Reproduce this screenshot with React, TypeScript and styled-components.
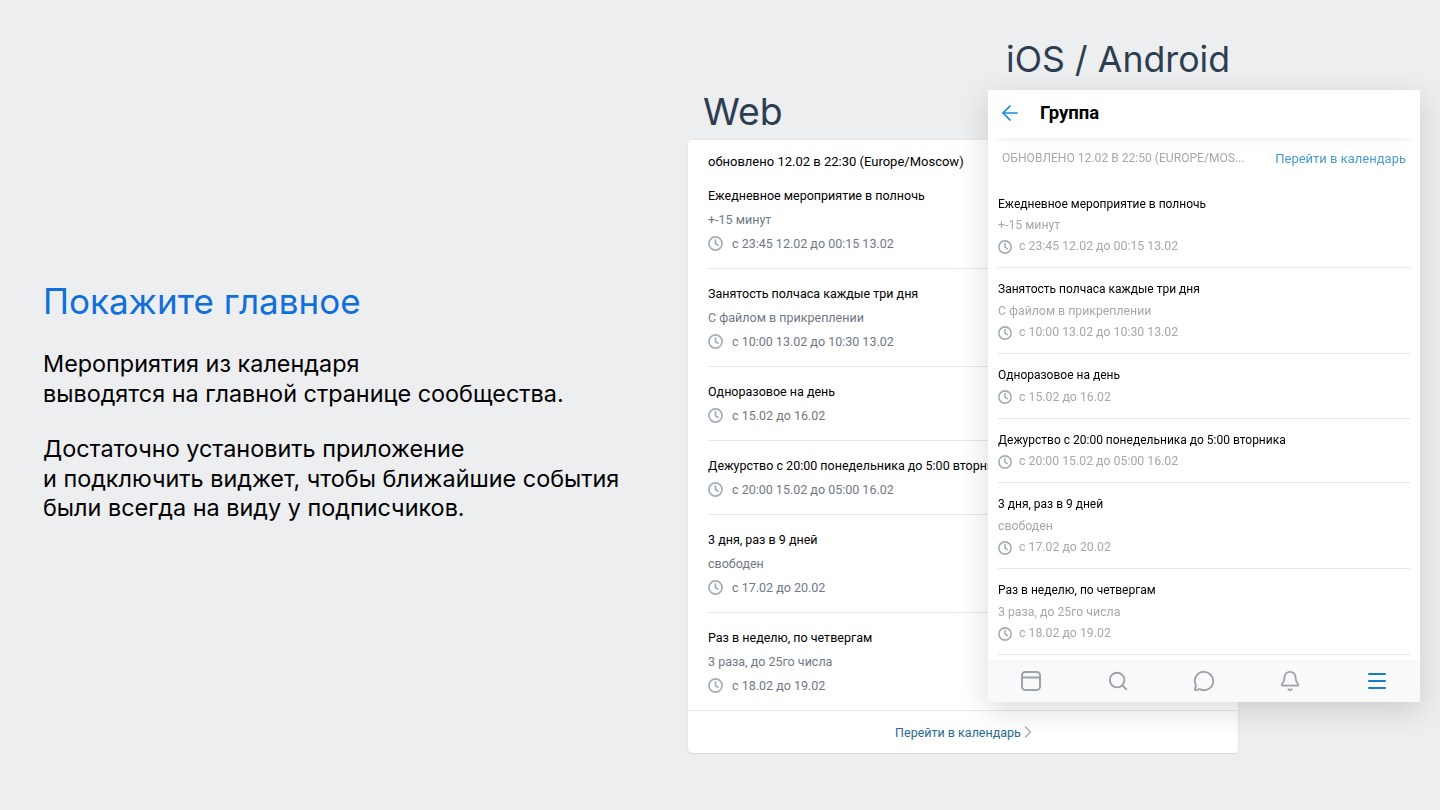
import * as React from 'react'
import styled, { createGlobalStyle } from 'styled-components'
import { ArrowLeft, Bell, ChevronRight, Menu, MessageCircle, Search } from 'lucide-react'

const GlobalStyle = createGlobalStyle`
  html, body {
    margin: 0;
    padding: 0;
    background: #edeef0;
  }
`

const Slide = styled.div`
  display: flex;
  width: 1440px;
  height: 810px;
  overflow: hidden;
  background: #edeef0;
  font-family: Roboto, "Liberation Sans", sans-serif;
`

const Intro = styled.div`
  box-sizing: border-box;
  flex: 0 0 688px;
  padding: 278px 0 0 43px;
  font-family: Inter, "Noto Sans", sans-serif;
`

const Heading = styled.h1`
  margin: 0 0 25px;
  font-size: 35px;
  line-height: 46px;
  font-weight: 400;
  color: #0f6fdc;
`

const Paragraph = styled.p`
  margin: 0 0 26px;
  font-size: 23.4px;
  line-height: 29.6px;
  font-weight: 400;
  color: #000;
`

const WebColumn = styled.div`
  flex: 0 0 550px;
`

const PhoneColumn = styled.div`
  position: relative;
  z-index: 1;
  flex: 0 0 432px;
  margin-left: -250px;
  padding-top: 40px;
`

const PlatformLabel = styled.div<{ $indent: number; $size: number }>`
  height: 50px;
  padding-left: ${p => p.$indent}px;
  font-family: Inter, "Noto Sans", sans-serif;
  font-size: ${p => p.$size}px;
  line-height: 38px;
  color: #2c3e50;
`

const WebLabelSlot = styled.div`
  padding-top: 93px;
  height: 47px;
`

const WebCard = styled.div`
  height: 613px;
  box-sizing: border-box;
  display: flex;
  flex-direction: column;
  background: #fff;
  border-radius: 4px;
  box-shadow: 0 1px 0 0 #d7d8db, 0 0 0 1px #e7e8ec;
  overflow: hidden;
`

const WebUpdated = styled.div`
  height: 19px;
  padding: 12px 20px 0;
  font-size: 13px;
  line-height: 20px;
  color: #000;
`

const WebList = styled.div`
  flex: 1;
  padding: 0 20px;
`

const WebRow = styled.div`
  padding: 12.5px 0;
  border-bottom: 1px solid #e7e8ec;
  &:last-child {
    border-bottom: none;
  }
`

const WebLine = styled.div`
  font-size: 12.5px;
  line-height: 24px;
  white-space: nowrap;
`

const WebTitle = styled(WebLine)`
  color: #000;
`

const WebSub = styled(WebLine)`
  color: #6f7985;
`

const TimeRow = styled.div<{ $gap: number }>`
  display: flex;
  align-items: center;
  gap: ${p => p.$gap}px;
  svg {
    flex: none;
    color: #a3adb8;
  }
`

const WebFooter = styled.div`
  flex: 0 0 43px;
  box-sizing: border-box;
  padding-left: 7px;
  border-top: 1px solid #e7e8ec;
  display: flex;
  align-items: center;
  justify-content: center;
  font-size: 12.5px;
  color: #2a6a94;
  svg {
    margin-left: -3px;
    color: #a3adb8;
  }
`

const Phone = styled.div`
  height: 612px;
  display: flex;
  flex-direction: column;
  background: #fff;
  box-shadow: 0 8px 30px rgba(0, 0, 0, 0.15);
`

const PhoneHeader = styled.div`
  flex: 0 0 48px;
  box-sizing: border-box;
  display: flex;
  align-items: center;
  gap: 18px;
  padding: 0 0 2px 10px;
  box-shadow: 0 12px 8px -10px rgba(0, 0, 0, 0.07);
  color: #0f8de3;
`

const PhoneTitle = styled.div`
  font-size: 18.5px;
  font-weight: 700;
  color: #000;
`

const PhoneBar = styled.div`
  display: flex;
  justify-content: space-between;
  align-items: center;
  height: 40px;
  padding: 0 14px;
  filter: blur(0.25px);
`

const PhoneUpdated = styled.div`
  font-size: 12.1px;
  color: #a5a8ad;
  text-transform: uppercase;
`

const PhoneLink = styled.div`
  font-size: 13px;
  color: #4c9bd9;
`

const PhoneList = styled.div`
  flex: 1;
  padding: 4.5px 10px 0;
  overflow: hidden;
  filter: blur(0.25px);
`

const PhoneRow = styled.div`
  padding: 11px 0 10px;
  border-bottom: 1px solid #e7e8ec;
`

const PhoneEventTitle = styled.div`
  font-size: 12px;
  line-height: 21.3px;
  white-space: nowrap;
  color: #000;
`

const PhoneSub = styled.div`
  font-size: 12.3px;
  line-height: 21.3px;
  white-space: nowrap;
  color: #a5a8ad;
`

const PhoneTabs = styled.div`
  flex: 0 0 42px;
  display: grid;
  grid-template-columns: repeat(5, 1fr);
  background: #f9f9fa;
`

const Tab = styled.div<{ $active?: boolean }>`
  display: flex;
  align-items: center;
  justify-content: center;
  color: ${p => (p.$active ? '#0f7fc9' : '#99a2ad')};
`

interface EventData {
  title: string
  sub?: string
  time: string
}

const events: EventData[] = [
  { title: 'Ежедневное мероприятие в полночь', sub: '+-15 минут', time: 'с 23:45 12.02 до 00:15 13.02' },
  { title: 'Занятость полчаса каждые три дня', sub: 'С файлом в прикреплении', time: 'с 10:00 13.02 до 10:30 13.02' },
  { title: 'Одноразовое на день', time: 'с 15.02 до 16.02' },
  { title: 'Дежурство с 20:00 понедельника до 5:00 вторника', time: 'с 20:00 15.02 до 05:00 16.02' },
  { title: '3 дня, раз в 9 дней', sub: 'свободен', time: 'с 17.02 до 20.02' },
  { title: 'Раз в неделю, по четвергам', sub: '3 раза, до 25го числа', time: 'с 18.02 до 19.02' }
]

const ClockIcon = ({ size }: { size: number }) => (
  <svg width={size} height={size} viewBox="0 0 16 16" fill="none" stroke="currentColor" strokeWidth="1.8">
    <circle cx="8" cy="8" r="7" />
    <path d="M8 4v4.2l2.6 1.6" strokeLinecap="round" />
  </svg>
)

const CalendarTab = () => (
  <svg width="20" height="20" viewBox="0 0 20 20" fill="none" stroke="currentColor" strokeWidth="2">
    <rect x="1" y="1" width="18" height="18" rx="3.5" />
    <path d="M1 6.5h18" />
  </svg>
)

const App: React.FC = () => (
  <Slide>
    <GlobalStyle />
    <Intro>
      <Heading>Покажите главное</Heading>
      <Paragraph>
        Мероприятия из календаря
        <br />
        выводятся на главной странице сообщества.
      </Paragraph>
      <Paragraph>
        Достаточно установить приложение
        <br />и подключить виджет, чтобы ближайшие события
        <br />
        были всегда на виду у подписчиков.
      </Paragraph>
    </Intro>
    <WebColumn>
      <WebLabelSlot>
        <PlatformLabel $indent={15} $size={37.4}>
          Web
        </PlatformLabel>
      </WebLabelSlot>
      <WebCard>
        <WebUpdated>обновлено 12.02 в 22:30 (Europe/Moscow)</WebUpdated>
        <WebList>
          {events.map(event => (
            <WebRow key={event.title}>
              <WebTitle>{event.title}</WebTitle>
              {event.sub && <WebSub>{event.sub}</WebSub>}
              <TimeRow $gap={9}>
                <ClockIcon size={15} />
                <WebSub>{event.time}</WebSub>
              </TimeRow>
            </WebRow>
          ))}
        </WebList>
        <WebFooter>
          Перейти в календарь
          <ChevronRight size={20} strokeWidth={1.6} />
        </WebFooter>
      </WebCard>
    </WebColumn>
    <PhoneColumn>
      <PlatformLabel $indent={18} $size={35.7}>
        iOS / Android
      </PlatformLabel>
      <Phone>
        <PhoneHeader>
          <ArrowLeft size={24} strokeWidth={1.7} />
          <PhoneTitle>Группа</PhoneTitle>
        </PhoneHeader>
        <PhoneBar>
          <PhoneUpdated>обновлено 12.02 в 22:50 (Europe/Mos...</PhoneUpdated>
          <PhoneLink>Перейти в календарь</PhoneLink>
        </PhoneBar>
        <PhoneList>
          {events.map(event => (
            <PhoneRow key={event.title}>
              <PhoneEventTitle>{event.title}</PhoneEventTitle>
              {event.sub && <PhoneSub>{event.sub}</PhoneSub>}
              <TimeRow $gap={7}>
                <ClockIcon size={14} />
                <PhoneSub>{event.time}</PhoneSub>
              </TimeRow>
            </PhoneRow>
          ))}
        </PhoneList>
        <PhoneTabs>
          <Tab>
            <CalendarTab />
          </Tab>
          <Tab>
            <Search size={22} strokeWidth={2} />
          </Tab>
          <Tab>
            <MessageCircle size={22} strokeWidth={2} />
          </Tab>
          <Tab>
            <Bell size={22} strokeWidth={2} />
          </Tab>
          <Tab $active>
            <Menu size={24} strokeWidth={2} />
          </Tab>
        </PhoneTabs>
      </Phone>
    </PhoneColumn>
  </Slide>
)

export default App
